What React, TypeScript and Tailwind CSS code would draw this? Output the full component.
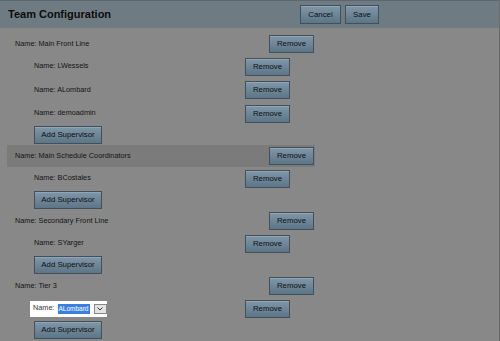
import React from "react";

type Team = {
  name: string;
  members: string[];
  highlight?: boolean;
  editing?: string;
};

const teams: Team[] = [
  { name: "Main Front Line", members: ["LWessels", "ALombard", "demoadmin"] },
  { name: "Main Schedule Coordinators", members: ["BCostales"], highlight: true },
  { name: "Secondary Front Line", members: ["SYarger"] },
  { name: "Tier 3", members: [], editing: "ALombard" },
];

const btn =
  "h-[18px] border border-[#435059] bg-linear-to-b from-[#7f97a8] to-[#5d7687] text-[7.8px] leading-none text-[#0e0e0e] shadow-[inset_0_1px_0_rgba(255,255,255,0.15)]";

function Button({ label, className = "" }: { label: string; className?: string }) {
  return <button className={`${btn} ${className}`}>{label}</button>;
}

function TeamBlock({ team }: { team: Team }) {
  return (
    <div>
      <div
        className={`flex h-[22px] w-[308px] items-center justify-between pl-[8px] pr-[1px] ${
          team.highlight ? "bg-[#7b7b7b]" : ""
        }`}
      >
        <span className="text-[7.3px] text-[#141414]">Name: {team.name}</span>
        <Button label="Remove" className="w-[45px]" />
      </div>
      {team.members.map((m) => (
        <div key={m} className="flex h-[23.5px] w-[283px] items-center justify-between pl-[27px]">
          <span className="text-[7.3px] text-[#141414]">Name: {m}</span>
          <Button label="Remove" className="w-[45px]" />
        </div>
      ))}
      {team.editing && (
        <div className="flex h-[23px] w-[283px] items-center justify-between pl-[23px]">
          <div className="flex h-[16px] w-[77px] items-center gap-[3px] bg-white pl-[3px]">
            <span className="text-[7.3px] text-[#333]">Name:</span>
            <span className="flex h-[10px] items-center bg-[#3d7fe0] px-[1px] text-[6.5px] text-white">
              {team.editing}
            </span>
            <span className="ml-[1px] flex h-[10px] w-[14px] items-center justify-center border border-[#888] bg-[#e4e4e4]">
              <svg width="6" height="4" viewBox="0 0 6 4">
                <path d="M0.5 0.5 L3 3 L5.5 0.5" fill="none" stroke="#333" strokeWidth="1" />
              </svg>
            </span>
          </div>
          <Button label="Remove" className="w-[45px]" />
        </div>
      )}
      <div className="flex h-[19.5px] items-center pl-[27px]">
        <Button label="Add Supervisor" className="w-[68px]" />
      </div>
    </div>
  );
}

export default function App() {
  return (
    <div className="h-[341px] w-[500px] overflow-hidden border-r border-[#6a6a6a] bg-[#888888] font-['Liberation_Sans',Arial,sans-serif]">
      <div className="flex h-[28px] items-center border-t border-[#5c666c] bg-[#6f7b83] pl-[8px]">
        <h1 className="text-[11px] font-bold text-[#0c0c0c]">Team Configuration</h1>
        <div className="ml-auto mr-[120px] flex gap-[4px]">
          <Button label="Cancel" className="h-[19px] w-[41px]" />
          <Button label="Save" className="h-[19px] w-[34px]" />
        </div>
      </div>
      <div className="pl-[7px] pt-[5px]">
        {teams.map((t) => (
          <TeamBlock key={t.name} team={t} />
        ))}
      </div>
    </div>
  );
}
